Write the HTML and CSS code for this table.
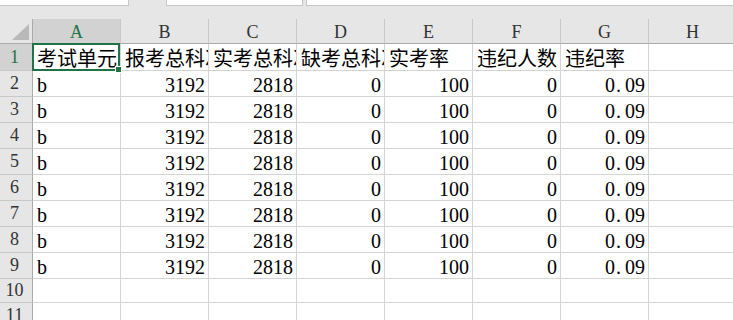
FILE: index.html
```html
<!DOCTYPE html>
<html lang="zh">
<head>
<meta charset="utf-8">
<title>Sheet</title>
<link rel="stylesheet" href="styles.css">
</head>
<body>
<div class="topbar">
  <div class="box namebox"></div>
  <div class="gap"></div>
  <div class="box fxbox"></div>
  <div class="gap2"></div>
  <div class="box formula"></div>
</div>
<div class="band"></div>
<div class="sheet">
  <div class="corner"><svg width="32" height="24" viewBox="0 0 32 24"><polygon points="12,21 29,5 29,21" fill="#b9b9b9"/></svg></div>
  <div class="ch sel">A</div><div class="ch">B</div><div class="ch">C</div><div class="ch">D</div><div class="ch">E</div><div class="ch">F</div><div class="ch">G</div><div class="ch">H</div>

  <div class="rh sel r1">1</div>
  <div class="c t r1 active">考试单元<div class="selbox"><span class="handle"></span></div></div>
  <div class="c t r1">报考总科次</div>
  <div class="c t r1">实考总科次</div>
  <div class="c t r1">缺考总科次</div>
  <div class="c t r1">实考率</div>
  <div class="c t r1">违纪人数</div>
  <div class="c t r1">违纪率</div>
  <div class="c r1"></div>

  <div class="rh">2</div><div class="c t">b</div><div class="c n">3192</div><div class="c n">2818</div><div class="c n">0</div><div class="c n">100</div><div class="c n">0</div><div class="c n">0<span class="dot">.</span>09</div><div class="c"></div>
  <div class="rh">3</div><div class="c t">b</div><div class="c n">3192</div><div class="c n">2818</div><div class="c n">0</div><div class="c n">100</div><div class="c n">0</div><div class="c n">0<span class="dot">.</span>09</div><div class="c"></div>
  <div class="rh">4</div><div class="c t">b</div><div class="c n">3192</div><div class="c n">2818</div><div class="c n">0</div><div class="c n">100</div><div class="c n">0</div><div class="c n">0<span class="dot">.</span>09</div><div class="c"></div>
  <div class="rh">5</div><div class="c t">b</div><div class="c n">3192</div><div class="c n">2818</div><div class="c n">0</div><div class="c n">100</div><div class="c n">0</div><div class="c n">0<span class="dot">.</span>09</div><div class="c"></div>
  <div class="rh">6</div><div class="c t">b</div><div class="c n">3192</div><div class="c n">2818</div><div class="c n">0</div><div class="c n">100</div><div class="c n">0</div><div class="c n">0<span class="dot">.</span>09</div><div class="c"></div>
  <div class="rh">7</div><div class="c t">b</div><div class="c n">3192</div><div class="c n">2818</div><div class="c n">0</div><div class="c n">100</div><div class="c n">0</div><div class="c n">0<span class="dot">.</span>09</div><div class="c"></div>
  <div class="rh">8</div><div class="c t">b</div><div class="c n">3192</div><div class="c n">2818</div><div class="c n">0</div><div class="c n">100</div><div class="c n">0</div><div class="c n">0<span class="dot">.</span>09</div><div class="c"></div>
  <div class="rh">9</div><div class="c t">b</div><div class="c n">3192</div><div class="c n">2818</div><div class="c n">0</div><div class="c n">100</div><div class="c n">0</div><div class="c n">0<span class="dot">.</span>09</div><div class="c"></div>

  <div class="rh">10</div><div class="c"></div><div class="c"></div><div class="c"></div><div class="c"></div><div class="c"></div><div class="c"></div><div class="c"></div><div class="c"></div>
  <div class="rh">11</div><div class="c"></div><div class="c"></div><div class="c"></div><div class="c"></div><div class="c"></div><div class="c"></div><div class="c"></div><div class="c"></div>
</div>
</body>
</html>
```
FILE: styles.css
```css
* { box-sizing: border-box; }
html, body {
  margin: 0;
  padding: 0;
  width: 733px;
  height: 320px;
  overflow: hidden;
  background: #e6e6e6;
}
.topbar {
  display: flex;
  height: 6px;
}
.box {
  background: #ffffff;
  border: 1px solid #c6c6c6;
  border-top: none;
  height: 6px;
}
.namebox { width: 129px; border-left: none; }
.gap { width: 37px; }
.fxbox { width: 137px; }
.gap2 { width: 3px; }
.formula { flex: 1; border-right: none; }
.band { height: 13px; }
.sheet {
  display: grid;
  grid-template-columns: 33px repeat(8, 88px);
  grid-template-rows: 25px 27px repeat(8, 26px) 24px 26px;
  width: 737px;
  font-family: "Liberation Serif", "Noto Sans CJK SC", serif;
  color: #000;
}
.corner {
  background: #e6e6e6;
  border-right: 1px solid #ababab;
  border-bottom: 1px solid #ababab;
  display: flex;
}
.corner svg { display: block; }
.ch {
  background: #e6e6e6;
  border-right: 1px solid #c8c8c8;
  border-bottom: 1px solid #ababab;
  font-size: 18px;
  color: #333;
  display: flex;
  align-items: center;
  justify-content: center;
  padding-top: 2px;
}
.rh {
  background: #e6e6e6;
  border-right: 1px solid #ababab;
  border-bottom: 1px solid #c8c8c8;
  font-size: 18px;
  color: #333;
  display: flex;
  align-items: center;
  justify-content: center;
  padding-right: 3px;
}
.ch.sel, .rh.sel {
  background: #d2d2d2;
  color: #217346;
}
.c {
  background: #ffffff;
  border-right: 1px solid #d4d4d4;
  border-bottom: 1px solid #d4d4d4;
  font-size: 20px;
  line-height: 22px;
  white-space: nowrap;
  overflow: hidden;
  display: flex;
  align-items: flex-end;
  padding: 0 3px 0 4px;
}
.c.n { justify-content: flex-end; }
.c.t { justify-content: flex-start; }
.dot {
  display: inline-block;
  width: 10px;
  text-align: left;
  padding-left: 1px;
}
.active {
  position: relative;
  overflow: visible;
  z-index: 2;
}
.active { clip-path: inset(-2px -6px -6px -2px); }
.selbox {
  position: absolute;
  left: -1px;
  top: -1px;
  right: 0;
  bottom: -1px;
  border: 2px solid #217346;
  pointer-events: none;
}
.handle {
  position: absolute;
  right: -4px;
  bottom: -4px;
  width: 7px;
  height: 7px;
  background: #217346;
  border: 1px solid #ffffff;
}
```
